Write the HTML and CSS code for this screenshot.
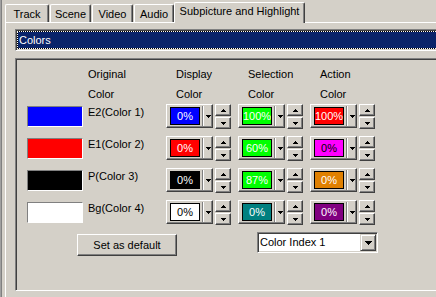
FILE: index.html
```html
<!DOCTYPE html>
<html>
<head>
<meta charset="utf-8">
<title>Subpicture and Highlight</title>
<link rel="stylesheet" href="styles.css">
</head>
<body>
<div class="window">
  <div class="tabctl">
    <div class="tabs">
      <div class="tab t-track">Track</div>
      <div class="tab t-scene">Scene</div>
      <div class="tab t-video">Video</div>
      <div class="tab t-audio">Audio</div>
      <div class="tab tab-sel">Subpicture and Highlight</div>
    </div>
    <div class="page">
      <div class="listbox"><div class="lb-focus"><div class="lb-item">Colors</div></div></div>
      <div class="group">
        <div class="hdr">
          <div class="h-orig">Original<br>Color</div>
          <div class="h-col">Display<br>Color</div>
          <div class="h-col">Selection<br>Color</div>
          <div class="h-col">Action<br>Color</div>
        </div>

        <div class="row">
          <div class="sw-cell"><div class="swatch c-blue"></div></div>
          <div class="label">E2(Color 1)</div>
          <div class="cell"><div class="combo"><div class="field c-blue">0%</div><div class="sep"></div><svg class="arr" width="5" height="3" viewBox="0 0 5 3"><rect x="0" y="0" width="5" height="1"/><rect x="1" y="1" width="3" height="1"/><rect x="2" y="2" width="1" height="1"/></svg></div><div class="spin"><div class="sb"><svg width="5" height="3" viewBox="0 0 5 3"><rect x="2" y="0" width="1" height="1"/><rect x="1" y="1" width="3" height="1"/><rect x="0" y="2" width="5" height="1"/></svg></div><div class="sb"><svg width="5" height="3" viewBox="0 0 5 3"><rect x="0" y="0" width="5" height="1"/><rect x="1" y="1" width="3" height="1"/><rect x="2" y="2" width="1" height="1"/></svg></div></div></div>
          <div class="cell"><div class="combo"><div class="field c-lime">100%</div><div class="sep"></div><svg class="arr" width="5" height="3" viewBox="0 0 5 3"><rect x="0" y="0" width="5" height="1"/><rect x="1" y="1" width="3" height="1"/><rect x="2" y="2" width="1" height="1"/></svg></div><div class="spin"><div class="sb"><svg width="5" height="3" viewBox="0 0 5 3"><rect x="2" y="0" width="1" height="1"/><rect x="1" y="1" width="3" height="1"/><rect x="0" y="2" width="5" height="1"/></svg></div><div class="sb"><svg width="5" height="3" viewBox="0 0 5 3"><rect x="0" y="0" width="5" height="1"/><rect x="1" y="1" width="3" height="1"/><rect x="2" y="2" width="1" height="1"/></svg></div></div></div>
          <div class="cell"><div class="combo"><div class="field c-red">100%</div><div class="sep"></div><svg class="arr" width="5" height="3" viewBox="0 0 5 3"><rect x="0" y="0" width="5" height="1"/><rect x="1" y="1" width="3" height="1"/><rect x="2" y="2" width="1" height="1"/></svg></div><div class="spin"><div class="sb"><svg width="5" height="3" viewBox="0 0 5 3"><rect x="2" y="0" width="1" height="1"/><rect x="1" y="1" width="3" height="1"/><rect x="0" y="2" width="5" height="1"/></svg></div><div class="sb"><svg width="5" height="3" viewBox="0 0 5 3"><rect x="0" y="0" width="5" height="1"/><rect x="1" y="1" width="3" height="1"/><rect x="2" y="2" width="1" height="1"/></svg></div></div></div>
        </div>

        <div class="row">
          <div class="sw-cell"><div class="swatch c-red"></div></div>
          <div class="label">E1(Color 2)</div>
          <div class="cell"><div class="combo"><div class="field c-red">0%</div><div class="sep"></div><svg class="arr" width="5" height="3" viewBox="0 0 5 3"><rect x="0" y="0" width="5" height="1"/><rect x="1" y="1" width="3" height="1"/><rect x="2" y="2" width="1" height="1"/></svg></div><div class="spin"><div class="sb"><svg width="5" height="3" viewBox="0 0 5 3"><rect x="2" y="0" width="1" height="1"/><rect x="1" y="1" width="3" height="1"/><rect x="0" y="2" width="5" height="1"/></svg></div><div class="sb"><svg width="5" height="3" viewBox="0 0 5 3"><rect x="0" y="0" width="5" height="1"/><rect x="1" y="1" width="3" height="1"/><rect x="2" y="2" width="1" height="1"/></svg></div></div></div>
          <div class="cell"><div class="combo"><div class="field c-lime">60%</div><div class="sep"></div><svg class="arr" width="5" height="3" viewBox="0 0 5 3"><rect x="0" y="0" width="5" height="1"/><rect x="1" y="1" width="3" height="1"/><rect x="2" y="2" width="1" height="1"/></svg></div><div class="spin"><div class="sb"><svg width="5" height="3" viewBox="0 0 5 3"><rect x="2" y="0" width="1" height="1"/><rect x="1" y="1" width="3" height="1"/><rect x="0" y="2" width="5" height="1"/></svg></div><div class="sb"><svg width="5" height="3" viewBox="0 0 5 3"><rect x="0" y="0" width="5" height="1"/><rect x="1" y="1" width="3" height="1"/><rect x="2" y="2" width="1" height="1"/></svg></div></div></div>
          <div class="cell"><div class="combo"><div class="field c-magenta dark">0%</div><div class="sep"></div><svg class="arr" width="5" height="3" viewBox="0 0 5 3"><rect x="0" y="0" width="5" height="1"/><rect x="1" y="1" width="3" height="1"/><rect x="2" y="2" width="1" height="1"/></svg></div><div class="spin"><div class="sb"><svg width="5" height="3" viewBox="0 0 5 3"><rect x="2" y="0" width="1" height="1"/><rect x="1" y="1" width="3" height="1"/><rect x="0" y="2" width="5" height="1"/></svg></div><div class="sb"><svg width="5" height="3" viewBox="0 0 5 3"><rect x="0" y="0" width="5" height="1"/><rect x="1" y="1" width="3" height="1"/><rect x="2" y="2" width="1" height="1"/></svg></div></div></div>
        </div>

        <div class="row">
          <div class="sw-cell"><div class="swatch c-black"></div></div>
          <div class="label">P(Color 3)</div>
          <div class="cell"><div class="combo"><div class="field c-black">0%</div><div class="sep"></div><svg class="arr" width="5" height="3" viewBox="0 0 5 3"><rect x="0" y="0" width="5" height="1"/><rect x="1" y="1" width="3" height="1"/><rect x="2" y="2" width="1" height="1"/></svg></div><div class="spin"><div class="sb"><svg width="5" height="3" viewBox="0 0 5 3"><rect x="2" y="0" width="1" height="1"/><rect x="1" y="1" width="3" height="1"/><rect x="0" y="2" width="5" height="1"/></svg></div><div class="sb"><svg width="5" height="3" viewBox="0 0 5 3"><rect x="0" y="0" width="5" height="1"/><rect x="1" y="1" width="3" height="1"/><rect x="2" y="2" width="1" height="1"/></svg></div></div></div>
          <div class="cell"><div class="combo"><div class="field c-lime">87%</div><div class="sep"></div><svg class="arr" width="5" height="3" viewBox="0 0 5 3"><rect x="0" y="0" width="5" height="1"/><rect x="1" y="1" width="3" height="1"/><rect x="2" y="2" width="1" height="1"/></svg></div><div class="spin"><div class="sb"><svg width="5" height="3" viewBox="0 0 5 3"><rect x="2" y="0" width="1" height="1"/><rect x="1" y="1" width="3" height="1"/><rect x="0" y="2" width="5" height="1"/></svg></div><div class="sb"><svg width="5" height="3" viewBox="0 0 5 3"><rect x="0" y="0" width="5" height="1"/><rect x="1" y="1" width="3" height="1"/><rect x="2" y="2" width="1" height="1"/></svg></div></div></div>
          <div class="cell"><div class="combo"><div class="field c-orange">0%</div><div class="sep"></div><svg class="arr" width="5" height="3" viewBox="0 0 5 3"><rect x="0" y="0" width="5" height="1"/><rect x="1" y="1" width="3" height="1"/><rect x="2" y="2" width="1" height="1"/></svg></div><div class="spin"><div class="sb"><svg width="5" height="3" viewBox="0 0 5 3"><rect x="2" y="0" width="1" height="1"/><rect x="1" y="1" width="3" height="1"/><rect x="0" y="2" width="5" height="1"/></svg></div><div class="sb"><svg width="5" height="3" viewBox="0 0 5 3"><rect x="0" y="0" width="5" height="1"/><rect x="1" y="1" width="3" height="1"/><rect x="2" y="2" width="1" height="1"/></svg></div></div></div>
        </div>

        <div class="row">
          <div class="sw-cell"><div class="swatch c-white"></div></div>
          <div class="label">Bg(Color 4)</div>
          <div class="cell"><div class="combo"><div class="field c-white dark">0%</div><div class="sep"></div><svg class="arr" width="5" height="3" viewBox="0 0 5 3"><rect x="0" y="0" width="5" height="1"/><rect x="1" y="1" width="3" height="1"/><rect x="2" y="2" width="1" height="1"/></svg></div><div class="spin"><div class="sb"><svg width="5" height="3" viewBox="0 0 5 3"><rect x="2" y="0" width="1" height="1"/><rect x="1" y="1" width="3" height="1"/><rect x="0" y="2" width="5" height="1"/></svg></div><div class="sb"><svg width="5" height="3" viewBox="0 0 5 3"><rect x="0" y="0" width="5" height="1"/><rect x="1" y="1" width="3" height="1"/><rect x="2" y="2" width="1" height="1"/></svg></div></div></div>
          <div class="cell"><div class="combo"><div class="field c-teal">0%</div><div class="sep"></div><svg class="arr" width="5" height="3" viewBox="0 0 5 3"><rect x="0" y="0" width="5" height="1"/><rect x="1" y="1" width="3" height="1"/><rect x="2" y="2" width="1" height="1"/></svg></div><div class="spin"><div class="sb"><svg width="5" height="3" viewBox="0 0 5 3"><rect x="2" y="0" width="1" height="1"/><rect x="1" y="1" width="3" height="1"/><rect x="0" y="2" width="5" height="1"/></svg></div><div class="sb"><svg width="5" height="3" viewBox="0 0 5 3"><rect x="0" y="0" width="5" height="1"/><rect x="1" y="1" width="3" height="1"/><rect x="2" y="2" width="1" height="1"/></svg></div></div></div>
          <div class="cell"><div class="combo"><div class="field c-purple">0%</div><div class="sep"></div><svg class="arr" width="5" height="3" viewBox="0 0 5 3"><rect x="0" y="0" width="5" height="1"/><rect x="1" y="1" width="3" height="1"/><rect x="2" y="2" width="1" height="1"/></svg></div><div class="spin"><div class="sb"><svg width="5" height="3" viewBox="0 0 5 3"><rect x="2" y="0" width="1" height="1"/><rect x="1" y="1" width="3" height="1"/><rect x="0" y="2" width="5" height="1"/></svg></div><div class="sb"><svg width="5" height="3" viewBox="0 0 5 3"><rect x="0" y="0" width="5" height="1"/><rect x="1" y="1" width="3" height="1"/><rect x="2" y="2" width="1" height="1"/></svg></div></div></div>
        </div>

        <div class="bottom">
          <div class="btn">Set as default</div>
          <div class="select">
            <div class="sel-text">Color Index 1</div>
            <div class="sel-btn"><svg width="7" height="4" viewBox="0 0 7 4"><rect x="0" y="0" width="7" height="1"/><rect x="1" y="1" width="5" height="1"/><rect x="2" y="2" width="3" height="1"/><rect x="3" y="3" width="1" height="1"/></svg></div>
          </div>
        </div>
      </div>
    </div>
  </div>
</div>
</body>
</html>
```

FILE: styles.css
```css
html, body {
  margin: 0;
  padding: 0;
}
body {
  width: 436px;
  height: 297px;
  overflow: hidden;
  background: linear-gradient(to right, #a0a0a0 0 1px, #808080 1px 2px, #d4d0c8 2px);
  font-family: "Liberation Sans", Arial, sans-serif;
  font-size: 11px;
  color: #000;
}
svg {
  display: block;
  shape-rendering: crispEdges;
  fill: #000;
}
.window {
  padding-left: 5px;
  height: 297px;
  box-sizing: border-box;
}
.tabctl {
  width: 431px;
}
.tabs {
  display: flex;
  align-items: flex-end;
  height: 23px;
  background: linear-gradient(#fff, #fff) left bottom / 100% 1px no-repeat;
}
.tab {
  box-sizing: border-box;
  height: 18px;
  margin-bottom: 1px;
  margin-right: 1px;
  border-top: 1px solid #fff;
  border-left: 1px solid #fff;
  border-right: 1px solid #404040;
  border-top-left-radius: 2px;
  border-top-right-radius: 2px;
  box-shadow: inset -1px 0 #808080;
  background: #d4d0c8;
  text-align: center;
  line-height: 13px;
  padding-top: 3px;
  white-space: nowrap;
}
.t-track { width: 44px; }
.t-scene { width: 41px; }
.t-video { width: 41px; }
.t-audio { width: 40px; margin-right: 0; }
.tab-sel {
  width: 131px;
  height: 21px;
  margin-bottom: 0;
  padding-top: 2px;
}
.page {
  border-left: 1px solid #fff;
  padding: 6px 0 0 9px;
  height: 274px;
  box-sizing: border-box;
}
.listbox {
  width: 421px;
  height: 22px;
  box-sizing: border-box;
  border: 1px solid;
  border-right-width: 0;
  border-color: #808080 #fff #fff #808080;
  box-shadow: inset 1px 1px #404040, inset 0 -1px #d4d0c8;
  padding: 1px 0 1px 1px;
  background: #fff;
}
.lb-focus {
  background: #000;
  height: 18px;
}
.lb-item {
  box-sizing: border-box;
  height: 18px;
  border: 1px dotted #fff;
  border-right-width: 0;
  background: #0a246a;
  background-clip: padding-box;
  color: #fff;
  padding: 1px 0 0 1px;
  line-height: 15px;
}
.group {
  margin-top: 7px;
  width: 421px;
  height: 233px;
  box-sizing: border-box;
  border: 1px solid;
  border-right-width: 0;
  border-color: #808080 #fff #fff #808080;
  box-shadow: inset 1px 1px #404040, inset 0 -1px #d4d0c8;
  padding: 5px 0 0 1px;
}
.hdr {
  display: flex;
  height: 40px;
  line-height: 20px;
  padding-left: 71px;
}
.h-orig {
  width: 78px;
}
.h-col {
  width: 72px;
  box-sizing: border-box;
  padding-left: 10px;
}
.row {
  display: flex;
  align-items: flex-start;
  height: 25px;
  margin-bottom: 7px;
  padding-left: 10px;
}
.sw-cell {
  width: 61px;
}
.swatch {
  width: 56px;
  height: 21px;
  margin-top: 2px;
  box-sizing: border-box;
  border: 1px solid;
  border-color: #808080 #fff #fff #808080;
}
.label {
  width: 78px;
  padding-top: 2px;
  line-height: 13px;
  white-space: nowrap;
}
.cell {
  width: 72px;
  display: flex;
  gap: 2px;
}
.combo {
  width: 47px;
  height: 24px;
  box-sizing: border-box;
  border: 1px solid;
  border-color: #fff #404040 #404040 #fff;
  box-shadow: inset -1px -1px #808080;
  display: flex;
  align-items: flex-start;
  padding: 2px 0 0 3px;
}
.field {
  width: 30px;
  height: 18px;
  box-sizing: border-box;
  border: 1px solid #000;
  color: #fff;
  text-align: center;
  line-height: 16px;
  white-space: nowrap;
  overflow: hidden;
}
.field.dark {
  color: #000;
}
.sep {
  width: 2px;
  height: 20px;
  margin-left: 2px;
  margin-top: -1px;
  box-sizing: border-box;
  border-left: 1px solid #808080;
  border-right: 1px solid #fff;
}
.arr {
  margin-left: 2px;
  margin-top: 8px;
}
.spin {
  width: 16px;
  height: 25px;
  display: flex;
  flex-direction: column;
  gap: 1px;
}
.sb {
  height: 12px;
  box-sizing: border-box;
  border: 1px solid;
  border-color: #fff #404040 #404040 #fff;
  box-shadow: inset -1px -1px #808080;
  display: flex;
  align-items: center;
  justify-content: center;
}
.c-blue { background: #0000ff; }
.c-red { background: #ff0000; }
.c-black { background: #000000; }
.c-white { background: #ffffff; }
.c-lime { background: #00ff00; }
.c-magenta { background: #ff00ff; }
.c-orange { background: #e08000; }
.c-teal { background: #008080; }
.c-purple { background: #800080; }
.bottom {
  display: flex;
  align-items: flex-start;
  padding-left: 60px;
}
.btn {
  margin-top: 2px;
  width: 100px;
  height: 22px;
  box-sizing: border-box;
  border: 1px solid;
  border-color: #fff #404040 #404040 #fff;
  box-shadow: inset -1px -1px #808080;
  text-align: center;
  line-height: 20px;
}
.select {
  margin-left: 80px;
  width: 121px;
  height: 21px;
  box-sizing: border-box;
  border: 1px solid;
  border-color: #808080 #fff #fff #808080;
  box-shadow: inset 1px 1px #404040, inset -1px -1px #d4d0c8;
  padding: 1px;
  background: #fff;
  display: flex;
}
.sel-text {
  flex: 1;
  padding-left: 1px;
  line-height: 17px;
  white-space: nowrap;
}
.sel-btn {
  width: 16px;
  height: 17px;
  box-sizing: border-box;
  border: 1px solid;
  border-color: #d4d0c8 #404040 #404040 #d4d0c8;
  box-shadow: inset 1px 1px #fff, inset -1px -1px #808080;
  background: #d4d0c8;
  display: flex;
  align-items: center;
  justify-content: center;
}
```
